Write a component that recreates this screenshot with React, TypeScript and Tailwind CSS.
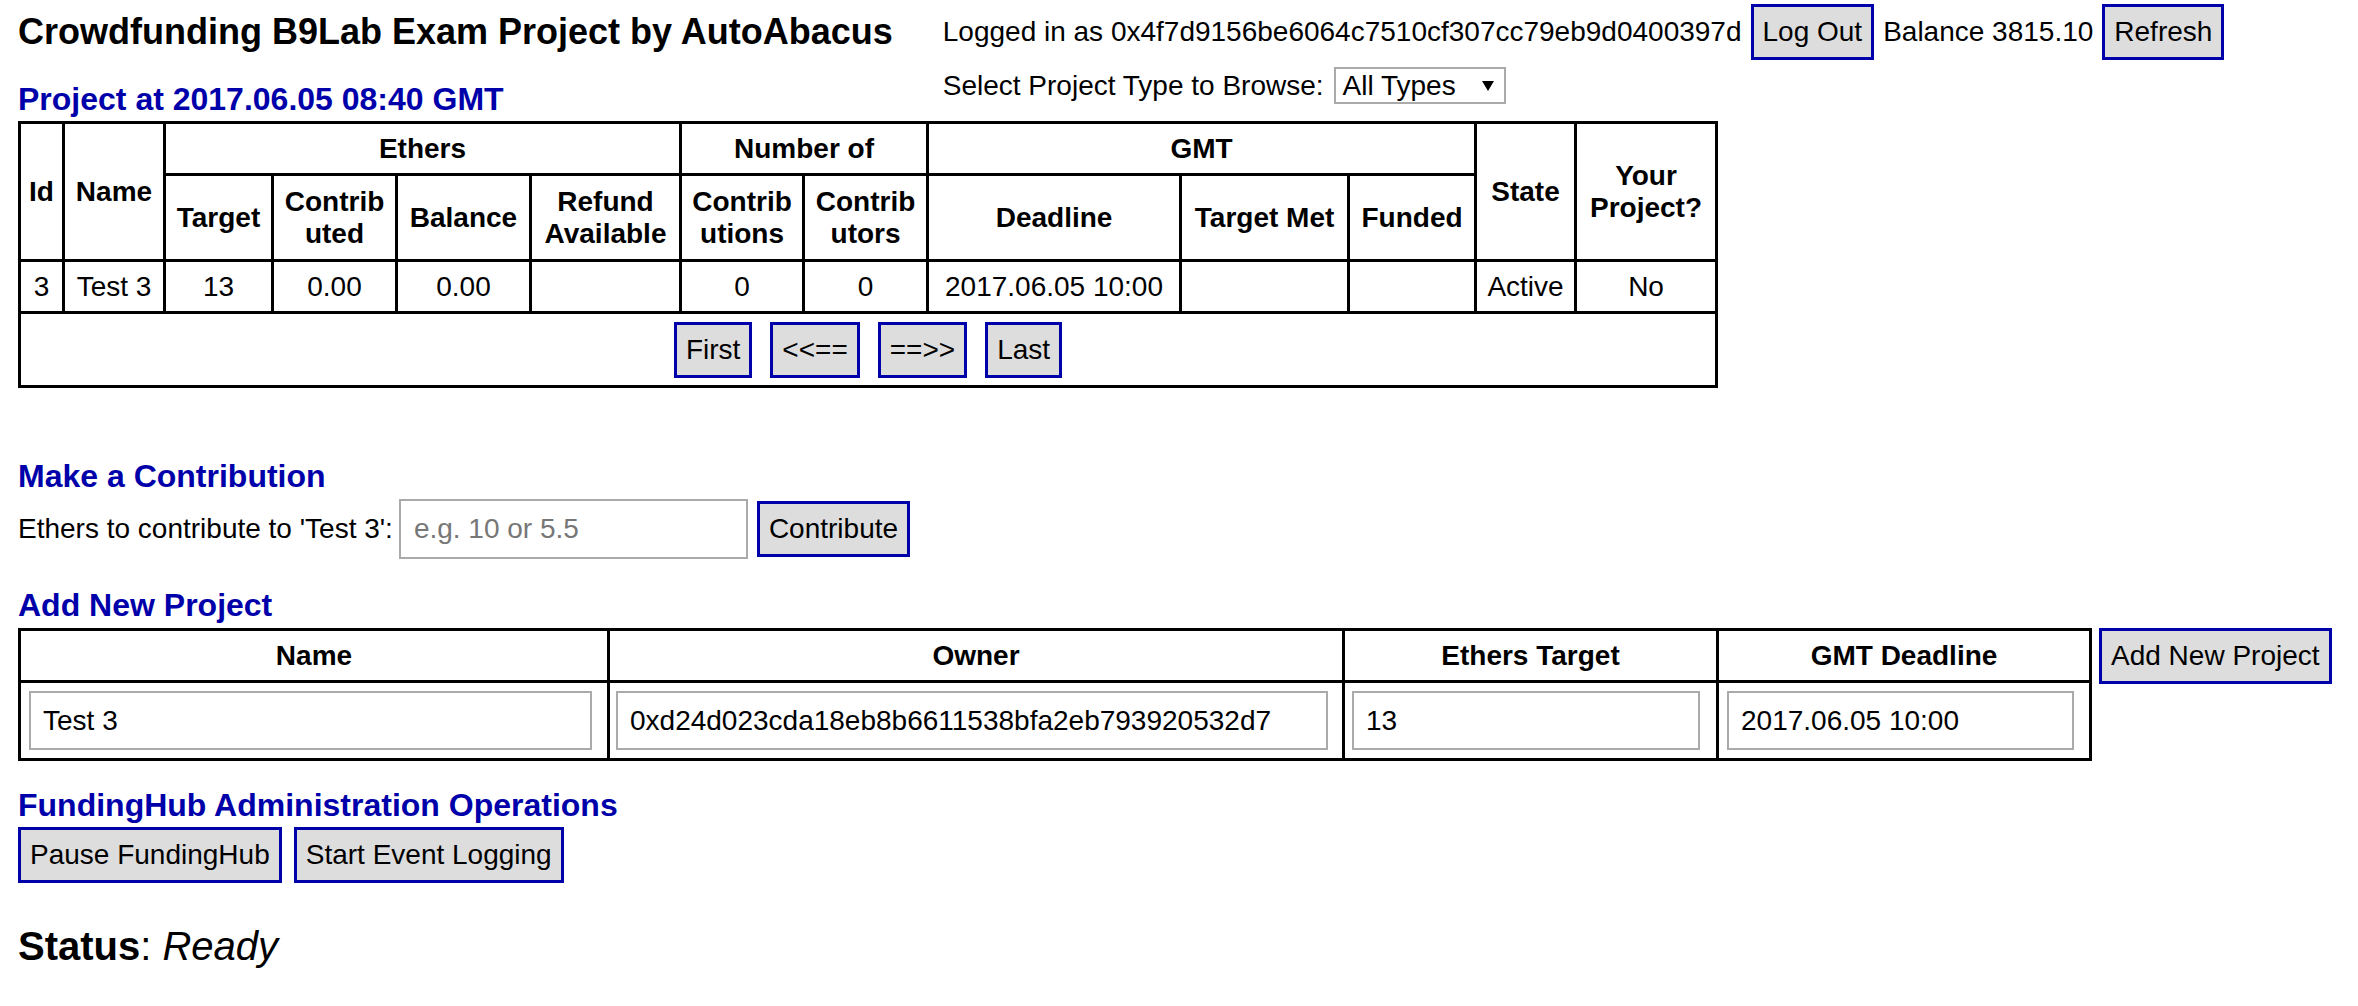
import React from 'react'

const btn =
  'bg-[#dddddd] border-[3px] border-[#0000aa] px-[9px] py-[9px] text-[28px] leading-[32px] text-black whitespace-nowrap'

const th = 'border-[3px] border-black font-bold text-center align-middle px-[4px]'
const td = 'border-[3px] border-black text-center align-middle px-[4px] whitespace-nowrap'
const field =
  'border-2 border-[#aaaaaa] bg-white h-[59px] pl-[12px] text-[28px] leading-[32px] text-black outline-none'

function Heading({ children, className = '' }: { children: React.ReactNode; className?: string }) {
  return <h2 className={`text-[32px] font-bold leading-[40px] text-[#0000aa] ${className}`}>{children}</h2>
}

export default function App() {
  return (
    <div
      className="min-h-screen bg-white pl-[18px] text-[28px] leading-[32px] text-black"
      style={{ fontFamily: '"Liberation Sans", Arial, sans-serif' }}
    >
      <div className="flex items-start">
        <div>
          <h1 className="pt-[12px] text-[36px] font-bold leading-[40px] whitespace-nowrap">
            Crowdfunding B9Lab Exam Project by AutoAbacus
          </h1>
          <Heading className="mt-[27px]">Project at 2017.06.05 08:40 GMT</Heading>
        </div>
        <div className="ml-[50px] pt-[4px]">
          <div className="flex items-center gap-[9px] whitespace-nowrap">
            <span>Logged in as 0x4f7d9156be6064c7510cf307cc79eb9d0400397d</span>
            <button className={btn}>Log Out</button>
            <span>Balance 3815.10</span>
            <button className={btn}>Refresh</button>
          </div>
          <div className="mt-[7px] flex items-center gap-[10px] whitespace-nowrap">
            <span>Select Project Type to Browse:</span>
            <div className="flex h-[37px] w-[172px] items-center justify-between border-2 border-[#aaaaaa] bg-white pl-[7px] pr-[10px]">
              <span>All Types</span>
              <svg width="12" height="10" viewBox="0 0 12 10">
                <polygon points="0,0 12,0 6,10" fill="#000" />
              </svg>
            </div>
          </div>
        </div>
      </div>

      <table className="mt-[2px] w-[1697px] table-fixed border-collapse border-[3px] border-black">
        <colgroup>
          <col className="w-[44px]" />
          <col className="w-[101px]" />
          <col className="w-[108px]" />
          <col className="w-[124px]" />
          <col className="w-[134px]" />
          <col className="w-[150px]" />
          <col className="w-[123px]" />
          <col className="w-[124px]" />
          <col className="w-[253px]" />
          <col className="w-[168px]" />
          <col className="w-[127px]" />
          <col className="w-[100px]" />
          <col className="w-[141px]" />
        </colgroup>
        <thead>
          <tr className="h-[52px]">
            <th rowSpan={2} className={th}>Id</th>
            <th rowSpan={2} className={th}>Name</th>
            <th colSpan={4} className={th}>Ethers</th>
            <th colSpan={2} className={th}>Number of</th>
            <th colSpan={3} className={th}>GMT</th>
            <th rowSpan={2} className={th}>State</th>
            <th rowSpan={2} className={th}>
              Your
              <br />
              Project?
            </th>
          </tr>
          <tr className="h-[86px]">
            <th className={th}>Target</th>
            <th className={th}>
              Contrib
              <br />
              uted
            </th>
            <th className={th}>Balance</th>
            <th className={th}>
              Refund
              <br />
              Available
            </th>
            <th className={th}>
              Contrib
              <br />
              utions
            </th>
            <th className={th}>
              Contrib
              <br />
              utors
            </th>
            <th className={th}>Deadline</th>
            <th className={`${th} whitespace-nowrap`}>Target Met</th>
            <th className={th}>Funded</th>
          </tr>
        </thead>
        <tbody>
          <tr className="h-[52px]">
            <td className={td}>3</td>
            <td className={td}>Test 3</td>
            <td className={td}>13</td>
            <td className={td}>0.00</td>
            <td className={td}>0.00</td>
            <td className={td}></td>
            <td className={td}>0</td>
            <td className={td}>0</td>
            <td className={td}>2017.06.05 10:00</td>
            <td className={td}></td>
            <td className={td}></td>
            <td className={td}>Active</td>
            <td className={td}>No</td>
          </tr>
          <tr className="h-[74px]">
            <td colSpan={13} className="border-[3px] border-black">
              <div className="flex justify-center gap-[18px]">
                <button className={btn}>First</button>
                <button className={btn}>{'<<=='}</button>
                <button className={btn}>{'==>>'}</button>
                <button className={btn}>Last</button>
              </div>
            </td>
          </tr>
        </tbody>
      </table>

      <Heading className="mt-[68px]">Make a Contribution</Heading>
      <div className="mt-[3px] flex items-center whitespace-nowrap">
        <span>Ethers to contribute to 'Test 3':</span>
        <input
          className="ml-[6px] h-[60px] w-[349px] border-2 border-[#aaaaaa] pl-[13px] text-[28px] leading-[32px] outline-none placeholder:text-[#777777]"
          placeholder="e.g. 10 or 5.5"
        />
        <button className={`${btn} ml-[9px]`}>Contribute</button>
      </div>

      <Heading className="mt-[26px]">Add New Project</Heading>
      <div className="mt-[3px] flex items-start">
        <table className="w-[2071px] table-fixed border-collapse border-[3px] border-black">
          <colgroup>
            <col className="w-[589px]" />
            <col className="w-[735px]" />
            <col className="w-[374px]" />
            <col className="w-[373px]" />
          </colgroup>
          <thead>
            <tr className="h-[52px]">
              <th className={th}>Name</th>
              <th className={th}>Owner</th>
              <th className={th}>Ethers Target</th>
              <th className={th}>GMT Deadline</th>
            </tr>
          </thead>
          <tbody>
            <tr className="h-[78px]">
              <td className="border-[3px] border-black pl-[8px]">
                <input className={`${field} w-[563px]`} defaultValue="Test 3" />
              </td>
              <td className="border-[3px] border-black pl-[6px]">
                <input
                  className={`${field} w-[712px]`}
                  defaultValue="0xd24d023cda18eb8b6611538bfa2eb793920532d7"
                />
              </td>
              <td className="border-[3px] border-black pl-[7px]">
                <input className={`${field} w-[348px]`} defaultValue="13" />
              </td>
              <td className="border-[3px] border-black pl-[8px]">
                <input className={`${field} w-[347px]`} defaultValue="2017.06.05 10:00" />
              </td>
            </tr>
          </tbody>
        </table>
        <button className={`${btn} ml-[7px]`}>Add New Project</button>
      </div>

      <Heading className="mt-[24px]">FundingHub Administration Operations</Heading>
      <div className="mt-[2px] flex gap-[12px]">
        <button className={btn}>Pause FundingHub</button>
        <button className={btn}>Start Event Logging</button>
      </div>

      <p className="mt-[39px] text-[40px] leading-[48px]">
        <span className="font-bold">Status</span>: <span className="italic">Ready</span>
      </p>
    </div>
  )
}
